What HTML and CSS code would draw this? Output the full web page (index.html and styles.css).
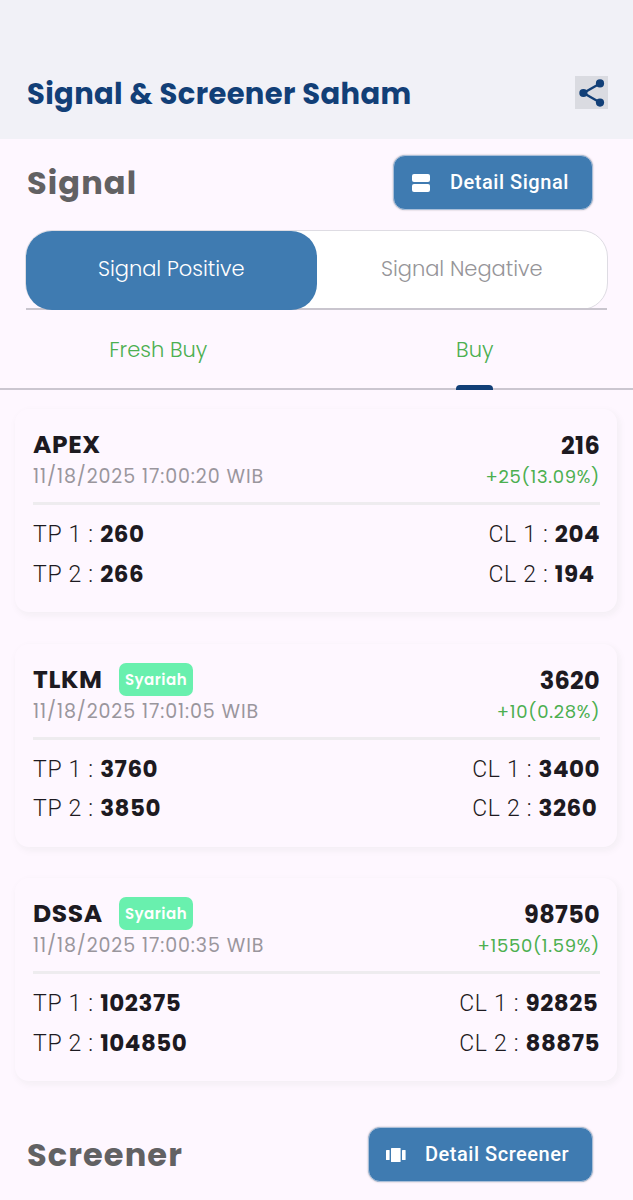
FILE: index.html
```html
<!DOCTYPE html>
<html lang="id">
<head>
<meta charset="utf-8">
<title>Signal &amp; Screener Saham</title>
<link rel="stylesheet" href="styles.css">
</head>
<body>
<header class="app-bar">
  <h1 class="title">Signal &amp; Screener Saham</h1>
  <button class="share" aria-label="Share">
    <svg viewBox="0 0 33 33" width="33" height="33"><path d="M25 7.5 8.5 17 25 26.5" fill="none" stroke="#123f77" stroke-width="2.4"/><circle cx="25" cy="7.4" r="4.1"/><circle cx="8.4" cy="17" r="4.1"/><circle cx="25" cy="26.6" r="4.1"/></svg>
  </button>
</header>
<section class="section-head">
  <h2 class="heading">Signal</h2>
  <button class="detail detail-signal">
    <svg viewBox="0 0 18 18" width="18" height="18"><rect width="18" height="8" rx="2"/><rect y="10" width="18" height="8" rx="2"/></svg>
    <span>Detail Signal</span>
  </button>
</section>
<nav class="segmented">
  <a class="segment active">Signal Positive</a>
  <a class="segment">Signal Negative</a>
</nav>
<nav class="tabs">
  <a class="tab"><span>Fresh Buy</span></a>
  <a class="tab selected"><span>Buy</span></a>
</nav>
<main class="cards">
  <article class="card">
    <div class="card-head">
      <div><div class="name-row"><b class="name">APEX</b></div><div class="date">11/18/2025 17:00:20 WIB</div></div>
      <div class="quote"><b class="price">216</b><span class="change">+25(13.09%)</span></div>
    </div>
    <div class="levels">
      <div><p>TP 1 : <b>260</b></p><p>TP 2 : <b>266</b></p></div>
      <div><p>CL 1 : <b>204</b></p><p>CL 2 : <b>194</b></p></div>
    </div>
  </article>
  <article class="card">
    <div class="card-head">
      <div><div class="name-row"><b class="name">TLKM</b><span class="badge">Syariah</span></div><div class="date">11/18/2025 17:01:05 WIB</div></div>
      <div class="quote"><b class="price">3620</b><span class="change">+10(0.28%)</span></div>
    </div>
    <div class="levels">
      <div><p>TP 1 : <b>3760</b></p><p>TP 2 : <b>3850</b></p></div>
      <div><p>CL 1 : <b>3400</b></p><p>CL 2 : <b>3260</b></p></div>
    </div>
  </article>
  <article class="card">
    <div class="card-head">
      <div><div class="name-row"><b class="name">DSSA</b><span class="badge">Syariah</span></div><div class="date">11/18/2025 17:00:35 WIB</div></div>
      <div class="quote"><b class="price">98750</b><span class="change">+1550(1.59%)</span></div>
    </div>
    <div class="levels">
      <div><p>TP 1 : <b>102375</b></p><p>TP 2 : <b>104850</b></p></div>
      <div><p>CL 1 : <b>92825</b></p><p>CL 2 : <b>88875</b></p></div>
    </div>
  </article>
</main>
<section class="section-head screener">
  <h2 class="heading">Screener</h2>
  <button class="detail detail-screener">
    <svg viewBox="0 0 20 14" width="20" height="14"><rect y="2" width="3.6" height="10" rx=".6"/><rect x="5" width="9.6" height="14" rx=".6"/><rect x="16" y="2" width="3.6" height="10" rx=".6"/></svg>
    <span>Detail Screener</span>
  </button>
</section>
</body>
</html>
```
FILE: styles.css
```css
* { box-sizing: border-box; }
html { overflow: hidden; }
body { margin: 0; height: 1200px; overflow: hidden; background: #fef7ff; color: #1d1a21; font-family: Poppins, Inter, sans-serif; }
h1, h2, p { margin: 0; }
button { border: 0; padding: 0; font: inherit; }
.app-bar { height: 139px; padding: 76px 25px 0 27px; display: flex; justify-content: space-between; align-items: flex-start; background: #f1f1f7; }
.title { font-size: 29px; line-height: 36px; font-weight: 700; letter-spacing: .36px; color: #123f77; white-space: nowrap; }
.share { width: 33px; height: 33px; display: flex; background: #dadbe1; }
.share svg { fill: #123f77; }
.section-head { height: 91px; padding: 16px 40px 0 27px; display: flex; justify-content: space-between; }
.heading { font-size: 32px; line-height: 56px; letter-spacing: 1.1px; color: #626163; }
.detail { height: 55px; display: flex; align-items: center; border: 1px solid #a9bfd9; border-radius: 12px; background: #3f7bb1; color: #fff; font: 500 20px Roboto, sans-serif; letter-spacing: .53px; box-shadow: 0 0 2px #0004; }
.detail svg { fill: #fff; }
.detail span { padding-bottom: 1px; }
.detail-signal { width: 200px; padding-left: 18px; gap: 20px; }
.detail-screener { width: 225px; padding-left: 17px; gap: 19px; }
.segmented { position: relative; height: 80px; margin: 0 25px; display: flex; border: 1px solid #dedce3; border-radius: 27px; background: #fff; }
.segmented::after { content: ""; position: absolute; left: 0; right: 0; bottom: -1px; height: 2px; background: #c9c5ce; }
.segment { flex: 1; display: flex; align-items: center; justify-content: center; font-size: 21px; font-weight: 300; color: #969599; padding-bottom: 3px; }
.segment.active { position: relative; z-index: 1; margin-bottom: -1px; color: #fff; background: #3f7bb1; border-radius: 26px; padding-bottom: 4px; }
.tabs { height: 80px; display: flex; border-bottom: 2px solid #cbc6d0; }
.tab { flex: 1; display: flex; justify-content: center; font-size: 21px; font-weight: 300; line-height: 79px; color: #4caf50; }
.tab.selected span { position: relative; }
.tab.selected span::after { content: ""; position: absolute; left: 0; right: 0; bottom: -2px; height: 5px; border-radius: 4px 4px 0 0; background: #123f77; }
.cards { padding: 19px 16px 0 15px; display: grid; gap: 31.3px; }
.card { height: 203.3px; padding: 19px 17px 0 18px; border-radius: 14px; background: #fef7ff; box-shadow: 2px 2px 8px 1px #00ff0003, 2px 3px 7px 2px #00000008; }
.card-head { height: 77px; display: flex; justify-content: space-between; border-bottom: 3px solid #eeecef; }
.name-row { height: 33px; display: flex; align-items: center; }
.name { width: 86px; font-size: 25px; line-height: 33px; letter-spacing: .6px; }
.badge { width: 74px; height: 33px; border-radius: 7px; background: #69f0ae; color: #fff; font-size: 15px; font-weight: 600; line-height: 34px; letter-spacing: .5px; text-align: center; }
.date { font-size: 19px; line-height: 32px; letter-spacing: .9px; color: #9a969d; }
.quote { display: flex; flex-direction: column; align-items: flex-end; }
.price { font-size: 24px; line-height: 35px; letter-spacing: .3px; }
.change { font-size: 18px; line-height: 28px; letter-spacing: .7px; color: #4caf50; }
.levels { padding-top: 10px; display: flex; justify-content: space-between; }
.levels p { height: 39.7px; font: 300 23px/39.7px Roboto, sans-serif; letter-spacing: .7px; white-space: nowrap; }
.levels b { font: 700 23px/39px Poppins, Inter, sans-serif; letter-spacing: .5px; }
.screener { padding-top: 46px; height: 120px; }
```
